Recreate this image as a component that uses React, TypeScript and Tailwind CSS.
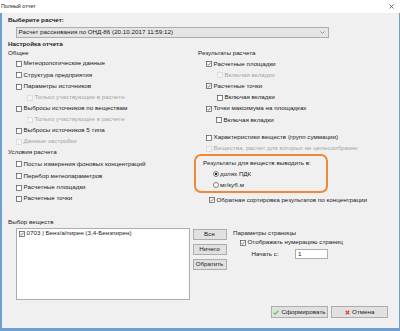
import React from "react";

type RowProps = {
  label: string;
  checked?: boolean;
  disabled?: boolean;
  className?: string;
};

// small win10-like checkbox
function Box({ checked, disabled }: { checked?: boolean; disabled?: boolean }) {
  return (
    <svg width="6" height="6" viewBox="0 0 6 6" className="shrink-0">
      <rect
        x="0.5"
        y="0.5"
        width="5"
        height="5"
        fill={disabled ? "#f4f4f4" : "#ffffff"}
        stroke={disabled ? "#d6d6d6" : "#4d4d4d"}
        strokeWidth="0.7"
      />
      {checked && (
        <path d="M1.4 3.1 L2.5 4.2 L4.7 1.7" fill="none" stroke="#3a3a3a" strokeWidth="0.7" />
      )}
    </svg>
  );
}

function Radio({ checked }: { checked?: boolean }) {
  return (
    <svg width="6" height="6" viewBox="0 0 6 6" className="shrink-0">
      <circle cx="3" cy="3" r="2.5" fill="#ffffff" stroke="#4d4d4d" strokeWidth="0.7" />
      {checked && <circle cx="3" cy="3" r="1.3" fill="#333333" />}
    </svg>
  );
}

function Row({ label, checked, disabled, className = "" }: RowProps) {
  return (
    <div className={`flex items-center gap-[1.5px] whitespace-nowrap ${className}`}>
      <Box checked={checked} disabled={disabled} />
      <span className={disabled ? "text-[#a6a6a6]" : "text-[#1a1a1a]"}>{label}</span>
    </div>
  );
}

export default function App() {
  return (
    <div className="w-[400px] h-[331px] flex flex-col bg-white overflow-hidden font-['Liberation_Sans',Arial,sans-serif] text-[6.25px] leading-none text-[#1a1a1a]">
      {/* title bar */}
      <div className="h-[13px] shrink-0 flex items-center justify-between pl-[1px] pr-[6px] bg-white">
        <span className="text-[5.4px]">Полный отчет</span>
        <svg width="5" height="5" viewBox="0 0 5 5">
          <path d="M0.5 0.5 L4.5 4.5 M4.5 0.5 L0.5 4.5" stroke="#333" strokeWidth="0.7" />
        </svg>
      </div>

      <div className="flex-1 flex flex-col bg-[#f0f0f0] border-l-2 border-r border-b-[3px] border-[#6d9fd3] pl-[6px]">
        <div className="h-[14px] flex items-center font-bold">Выберите расчет:</div>
        <div className="ml-[8px] w-[313px] h-[11px] flex items-center justify-between border border-[#adadad] bg-[#e5e5e5] pl-[1.5px] pr-[3px]">
          <span>Расчет рассеивания по ОНД-86 (20.10.2017 11:59:12)</span>
          <svg width="5" height="3" viewBox="0 0 5 3">
            <path d="M0.5 0.5 L2.5 2.5 L4.5 0.5" fill="none" stroke="#707070" strokeWidth="0.7" />
          </svg>
        </div>
        <div className="mt-[1px] h-[10px] flex items-center font-bold">Настройка отчета</div>

        <div className="flex">
          {/* left column */}
          <div className="w-[190px] flex flex-col">
            <div className="h-[9px] flex items-center">Общее</div>
            <Row className="h-[11px] pl-[8px]" label="Метеорологические данные" />
            <Row className="h-[12px] pl-[8px]" label="Структура предприятия" />
            <Row className="h-[11px] pl-[8px]" label="Параметры источников" />
            <Row className="h-[11px] pl-[19px]" disabled label="Только участвующие в расчете" />
            <Row className="h-[11px] pl-[8px]" label="Выбросы источников по веществам" />
            <Row className="h-[11px] pl-[19px]" disabled label="Только участвующие в расчете" />
            <Row className="h-[11px] pl-[8px]" label="Выбросы источников 5 типа" />
            <Row className="h-[11px] pl-[8px]" disabled label="Данные застройки" />
            <div className="h-[11px] flex items-center">Условия расчета</div>
            <Row className="h-[12px] pl-[8px]" label="Посты измерения фоновых концентраций" />
            <Row className="h-[12px] pl-[8px]" label="Перебор метеопараметров" />
            <Row className="h-[11px] pl-[8px]" label="Расчетные площадки" />
            <Row className="h-[11px] pl-[8px]" label="Расчетные точки" />
          </div>

          {/* right column */}
          <div className="flex flex-col">
            <div className="h-[9px] flex items-center">Результаты расчета</div>
            <Row className="h-[12px] pl-[8px]" checked label="Расчетные площадки" />
            <Row className="h-[10px] pl-[19px]" disabled label="Включая вкладки" />
            <Row className="h-[12px] pl-[8px]" checked label="Расчетные точки" />
            <Row className="h-[11px] pl-[19px]" label="Включая вкладки" />
            <Row className="h-[11px] pl-[8px]" checked label="Точки максимума на площадках" />
            <Row className="h-[12px] pl-[18px]" label="Включая вкладки" />
            <Row className="mt-[6px] h-[11px] pl-[8px]" label="Характеристики  веществ (групп суммации)" />
            <Row className="h-[11px] pl-[8px]" disabled label="Вещества, расчет для которых не целесообразен" />

            <div className="-ml-[4px] w-[134px] h-[39px] flex flex-col pt-[1px] border-2 border-[#f0873a] rounded-[7px]">
              <div className="h-[11.5px] flex items-center pl-[7px] whitespace-nowrap">
                Результаты для веществ выводить в:
              </div>
              <div className="h-[11.5px] flex items-center gap-[1.5px] pl-[16.5px]">
                <Radio checked />
                <span>долях ПДК</span>
              </div>
              <div className="h-[11.5px] flex items-center gap-[1.5px] pl-[16.5px]">
                <Radio />
                <span>мг/куб.м</span>
              </div>
            </div>
            <Row className="h-[14px] pl-[11px]" checked label="Обратная сортировка результатов по концентрации" />
          </div>
        </div>

        <div className="mt-[10px] h-[10px] flex items-center">Выбор веществ</div>

        <div className="mt-[1px] flex">
          <div className="ml-[8px] w-[174px] h-[72px] border border-[#abadb3] bg-white pl-[1px]">
            <Row className="h-[9px] pl-[1px]" checked label="0703 | Бенз/а/пирен (3,4-Бензпирен)" />
          </div>

          <div className="ml-[2.5px] mt-[1px] flex flex-col gap-[4.5px]">
            {["Все", "Ничего", "Обратить"].map((t) => (
              <div
                key={t}
                className="w-[34px] h-[10.5px] flex items-center justify-center border border-[#adadad] bg-[#e1e1e1]"
              >
                {t}
              </div>
            ))}
          </div>

          <div className="ml-[6.5px] mt-[1px] flex flex-col">
            <div className="h-[9px] flex items-center">Параметры страницы</div>
            <Row className="h-[9px] pl-[7px]" checked label="Отображать нумерацию страниц" />
            <div className="mt-[2px] flex items-center pl-[18.5px]">
              <span className="w-[43.5px]">Начать с:</span>
              <div className="w-[33px] h-[10px] flex items-center border border-[#abadb3] bg-white pl-[2px]">1</div>
            </div>
          </div>
        </div>

        <div className="mt-[6px] flex justify-end gap-[3px] pr-[11px]">
          <div className="w-[57px] h-[12px] flex items-center justify-center gap-[2px] border border-[#adadad] bg-[#e1e1e1]">
            <svg width="6" height="5" viewBox="0 0 6 5">
              <path d="M0.6 2.6 L2.2 4.1 L5.4 0.8" fill="none" stroke="#6cc24a" strokeWidth="1.3" />
            </svg>
            <span>Сформировать</span>
          </div>
          <div className="w-[57px] h-[12px] flex items-center justify-center gap-[2.5px] border border-[#adadad] bg-[#e1e1e1]">
            <svg width="5" height="5" viewBox="0 0 5 5">
              <path d="M0.7 0.7 L4.3 4.3 M4.3 0.7 L0.7 4.3" stroke="#e0462f" strokeWidth="1.3" />
            </svg>
            <span>Отмена</span>
          </div>
        </div>
      </div>
    </div>
  );
}
